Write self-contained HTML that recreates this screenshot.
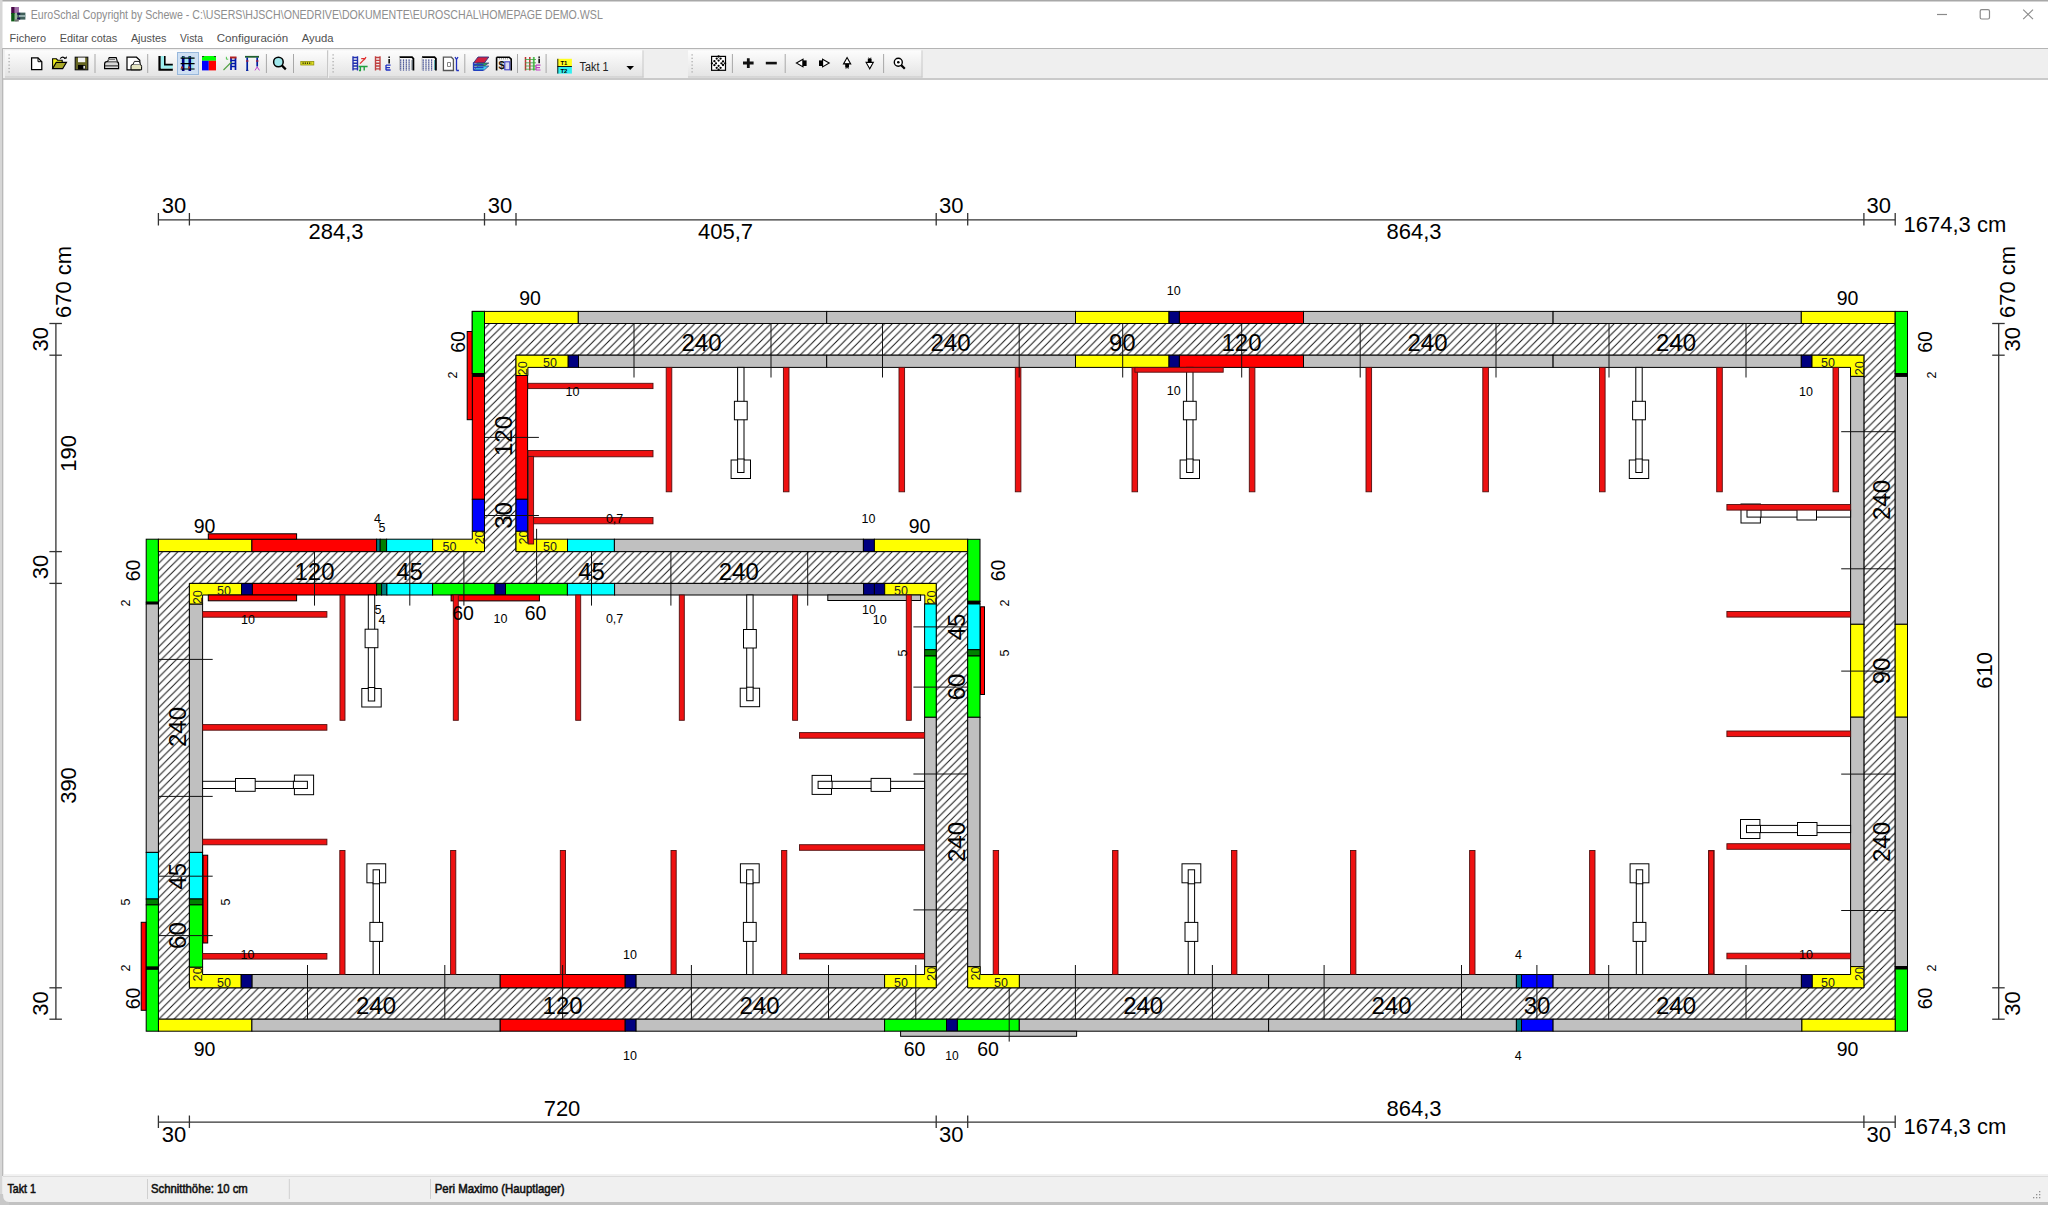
<!DOCTYPE html><html><head><meta charset="utf-8"><style>html,body{margin:0;padding:0;background:#fff;overflow:hidden}svg{display:block;font-family:"Liberation Sans",sans-serif}</style></head><body>
<svg width="2048" height="1205" viewBox="0 0 2048 1205">
<defs><pattern id="h" patternUnits="userSpaceOnUse" width="7.6" height="7.6"><path d="M-1,1 L1,-1 M0,7.6 L7.6,0 M6.6,8.6 L8.6,6.6" stroke="#111" stroke-width="1"/></pattern><linearGradient id="tb" x1="0" y1="0" x2="0" y2="1"><stop offset="0" stop-color="#fdfdfd"/><stop offset="1" stop-color="#e3e3e3"/></linearGradient></defs>
<rect x="0.0" y="0.0" width="2048.0" height="1205.0" fill="#ffffff"/>
<rect x="0.0" y="0.0" width="2048.0" height="1.5" fill="#a8a8a8"/>
<rect x="0.0" y="0.0" width="2.5" height="1205.0" fill="#d6d6d6"/>
<rect x="2.5" y="48.0" width="0.7" height="1128.0" fill="#888"/>
<rect x="11.2" y="7" width="3.6" height="7" fill="#4a0a4a"/><rect x="14.8" y="7" width="4.2" height="6" fill="#a070a8"/><rect x="11.2" y="13" width="3.6" height="8.4" fill="#0a5a14"/><rect x="14.8" y="13" width="2.4" height="8.4" fill="#9ab89a"/><rect x="17.2" y="12.6" width="8.2" height="7" fill="#40605a"/><rect x="17.2" y="12.8" width="3" height="2" fill="#1a1050"/><rect x="17.2" y="17.6" width="3" height="2" fill="#1a1050"/><rect x="19" y="15.2" width="6.4" height="1.6" fill="#a8c0c0"/><rect x="14.8" y="19.5" width="4" height="2" fill="#707070"/>
<text x="30.8" y="19.2" font-size="13.4" text-anchor="start" fill="#8e8e8e" textLength="572" lengthAdjust="spacingAndGlyphs">EuroSchal Copyright by Schewe - C:\USERS\HJSCH\ONEDRIVE\DOKUMENTE\EUROSCHAL\HOMEPAGE DEMO.WSL</text>
<line x1="1937.0" y1="14.5" x2="1947.0" y2="14.5" stroke="#8a8a8a" stroke-width="1.2"/>
<rect x="1980.2" y="9.7" width="9.3" height="9.3" rx="1.5" fill="none" stroke="#8a8a8a" stroke-width="1.2"/>
<line x1="2023.2" y1="9.6" x2="2033.0" y2="19.2" stroke="#8a8a8a" stroke-width="1.1"/>
<line x1="2033.0" y1="9.6" x2="2023.2" y2="19.2" stroke="#8a8a8a" stroke-width="1.1"/>
<text x="9.6" y="42.3" font-size="11.8" text-anchor="start" fill="#505050" textLength="36.5" lengthAdjust="spacingAndGlyphs">Fichero</text>
<text x="59.8" y="42.3" font-size="11.8" text-anchor="start" fill="#505050" textLength="57.4" lengthAdjust="spacingAndGlyphs">Editar cotas</text>
<text x="130.9" y="42.3" font-size="11.8" text-anchor="start" fill="#505050" textLength="35.5" lengthAdjust="spacingAndGlyphs">Ajustes</text>
<text x="180.1" y="42.3" font-size="11.8" text-anchor="start" fill="#505050" textLength="22.9" lengthAdjust="spacingAndGlyphs">Vista</text>
<text x="216.7" y="42.3" font-size="11.8" text-anchor="start" fill="#505050" textLength="71.4" lengthAdjust="spacingAndGlyphs">Configuración</text>
<text x="301.8" y="42.3" font-size="11.8" text-anchor="start" fill="#505050" textLength="31.8" lengthAdjust="spacingAndGlyphs">Ayuda</text>
<rect x="3.0" y="48.0" width="2045.0" height="1.0" fill="#b4b4b4"/>
<rect x="3.0" y="49.0" width="2045.0" height="29.0" fill="#efefef"/>
<rect x="3.0" y="78.2" width="2045.0" height="1.6" fill="#bdbdbd"/>
<rect x="5" y="50.3" width="323" height="27.200000000000003" fill="url(#tb)"/>
<rect x="327.0" y="50.3" width="1.0" height="27.2" fill="#c8c8c8"/>
<rect x="5.0" y="76.5" width="323.0" height="1.0" fill="#c8c8c8"/>
<rect x="8.5" y="54.3" width="1.2" height="1.2" fill="#a0a0a0"/>
<rect x="8.5" y="57.7" width="1.2" height="1.2" fill="#a0a0a0"/>
<rect x="8.5" y="61.1" width="1.2" height="1.2" fill="#a0a0a0"/>
<rect x="8.5" y="64.5" width="1.2" height="1.2" fill="#a0a0a0"/>
<rect x="8.5" y="67.9" width="1.2" height="1.2" fill="#a0a0a0"/>
<rect x="8.5" y="71.3" width="1.2" height="1.2" fill="#a0a0a0"/>
<rect x="329" y="50.3" width="314.5" height="27.200000000000003" fill="url(#tb)"/>
<rect x="642.5" y="50.3" width="1.0" height="27.2" fill="#c8c8c8"/>
<rect x="329.0" y="76.5" width="314.5" height="1.0" fill="#c8c8c8"/>
<rect x="332.5" y="54.3" width="1.2" height="1.2" fill="#a0a0a0"/>
<rect x="332.5" y="57.7" width="1.2" height="1.2" fill="#a0a0a0"/>
<rect x="332.5" y="61.1" width="1.2" height="1.2" fill="#a0a0a0"/>
<rect x="332.5" y="64.5" width="1.2" height="1.2" fill="#a0a0a0"/>
<rect x="332.5" y="67.9" width="1.2" height="1.2" fill="#a0a0a0"/>
<rect x="332.5" y="71.3" width="1.2" height="1.2" fill="#a0a0a0"/>
<rect x="688" y="50.3" width="234.5" height="27.200000000000003" fill="url(#tb)"/>
<rect x="921.5" y="50.3" width="1.0" height="27.2" fill="#c8c8c8"/>
<rect x="688.0" y="76.5" width="234.5" height="1.0" fill="#c8c8c8"/>
<rect x="691.5" y="54.3" width="1.2" height="1.2" fill="#a0a0a0"/>
<rect x="691.5" y="57.7" width="1.2" height="1.2" fill="#a0a0a0"/>
<rect x="691.5" y="61.1" width="1.2" height="1.2" fill="#a0a0a0"/>
<rect x="691.5" y="64.5" width="1.2" height="1.2" fill="#a0a0a0"/>
<rect x="691.5" y="67.9" width="1.2" height="1.2" fill="#a0a0a0"/>
<rect x="691.5" y="71.3" width="1.2" height="1.2" fill="#a0a0a0"/>
<rect x="94.5" y="54.0" width="1.0" height="19.0" fill="#a8a8a8"/>
<rect x="147.2" y="54.0" width="1.0" height="19.0" fill="#a8a8a8"/>
<rect x="265.9" y="54.0" width="1.0" height="19.0" fill="#a8a8a8"/>
<rect x="293.0" y="54.0" width="1.0" height="19.0" fill="#a8a8a8"/>
<rect x="464.3" y="54.0" width="1.0" height="19.0" fill="#a8a8a8"/>
<rect x="517.0" y="54.0" width="1.0" height="19.0" fill="#a8a8a8"/>
<rect x="545.6" y="54.0" width="1.0" height="19.0" fill="#a8a8a8"/>
<rect x="731.9" y="54.0" width="1.0" height="19.0" fill="#a8a8a8"/>
<rect x="784.7" y="54.0" width="1.0" height="19.0" fill="#a8a8a8"/>
<rect x="883.1" y="54.0" width="1.0" height="19.0" fill="#a8a8a8"/>
<path d="M31.6,57.9 h6.4 l3.8,3.8 v8 h-10.2 z" fill="#fff" stroke="#000" stroke-width="1.25"/><path d="M38,57.9 v3.8 h3.8" fill="none" stroke="#000" stroke-width="1"/>
<path d="M52.6,68.6 v-9.8 h3.8 l1.2,1.4 h4.6 v2.2" fill="#f2f21a" stroke="#000" stroke-width="1.1"/><path d="M52.6,68.6 l3.6,-6.2 h10.3 l-3.8,6.2 z" fill="#a9a92a" stroke="#000" stroke-width="1.1"/><path d="M60.2,58.6 q2.6,-3 5.2,0.2" fill="none" stroke="#000" stroke-width="1.1"/><path d="M64,58.6 h2.8 v-2.4 z" fill="#000"/>
<rect x="75.2" y="57.2" width="12.6" height="12.6" fill="#666622" stroke="#111" stroke-width="1.1"/><rect x="78" y="57.6" width="7.2" height="4.6" fill="#f4f4f4"/><rect x="78" y="65" width="7.4" height="4.4" fill="#000"/><rect x="83.4" y="65.8" width="1.5" height="2.8" fill="#fff"/>
<path d="M104.6,68.6 v-4.6 q0,-2.4 2.4,-2.4 h9.4 q2.2,0 2.2,2.4 v4.6 z" fill="#d8d8d8" stroke="#000" stroke-width="1.2"/><path d="M107.6,61.6 l1.6,-4 h7 l1.2,4" fill="#e8e8e8" stroke="#000" stroke-width="1.1"/><rect x="105" y="65.2" width="13.4" height="1.3" fill="#444"/><rect x="108" y="59" width="7" height="1" fill="#777"/>
<path d="M127,57.2 h9.5 l3.3,3 v9.6 h-12.8 z" fill="#fff" stroke="#000" stroke-width="1.2"/><path d="M131,69.8 v-3.6 q0,-1.8 1.8,-1.8 h6.6 q2.2,0 2.2,2 v3.4 z" fill="#e4e4c0" stroke="#000" stroke-width="1"/><path d="M133,64.4 l1.4,-3 h5 l1,3" fill="#fff" stroke="#000" stroke-width="0.9"/>
<path d="M158.4,56 h2.4 v12.4 h12 v2.3 h-14.4 z" fill="#000"/><path d="M160.8,56 h4 v8.6 h8 v3.8 h-12 z" fill="#9ef0f0"/><path d="M164.8,56 v8.6 h8" fill="none" stroke="#000" stroke-width="1.6"/>
<rect x="177.5" y="52.5" width="21" height="22" fill="#cfe0f3" stroke="#98b8dc" stroke-width="1"/>
<rect x="181.5" y="57" width="12" height="13" fill="#9ee8f0"/><path d="M183.2,56 v15 M189.8,56 v15" stroke="#000080" stroke-width="2.6"/><path d="M180.6,58.2 h14 M180.6,63.6 h14 M180.6,69 h14" stroke="#000" stroke-width="1.2"/><path d="M181,67.5 h2 M188,67.5 h2" stroke="#a03020" stroke-width="2"/><path d="M182.5,57 h1.5 M189,57 h1.5" stroke="#208040" stroke-width="1.5"/>
<rect x="202" y="56" width="14" height="4.8" fill="#00ff00"/><rect x="202" y="60.8" width="6.8" height="9.6" fill="#0000ff"/><rect x="208.8" y="60.8" width="7.2" height="9.6" fill="#ff0000"/><path d="M202,56.5 h2 M214,56.5 h2" stroke="#333" stroke-width="1"/>
<path d="M231,57.5 v12.5 M235.5,57.5 v12.5 M231,60.5 h4.5 M231,63.5 h4.5 M231,66.5 h4.5" stroke="#0018a8" stroke-width="1.7" fill="none"/><path d="M230,57.5 h6.5" stroke="#b02020" stroke-width="2"/><path d="M223.5,70 l8,-8" stroke="#50a040" stroke-width="1.1"/><path d="M226.4,56.8 v2.4 h1.8" stroke="#40c040" stroke-width="0.9" fill="none"/>
<path d="M245,56.8 h14" stroke="#206030" stroke-width="1.8"/><path d="M247.2,57.5 v13 M257.2,57.5 v9" stroke="#0020a0" stroke-width="1.7"/><path d="M246,61 h2.4 M256,61 h2.4" stroke="#a02040" stroke-width="1.4"/><path d="M255,70.4 l2.2,-3.5 l2.2,3.5" stroke="#c040d0" stroke-width="1" fill="none"/><path d="M246,70.4 h2.4" stroke="#0020a0" stroke-width="1"/>
<circle cx="278.4" cy="62" r="4.8" fill="#a0e8ec" stroke="#000" stroke-width="1.5"/><path d="M281.8,65.4 l4,4" stroke="#000" stroke-width="2.2"/>
<rect x="300.8" y="61.4" width="13" height="3.6" fill="#e0e020" stroke="#909010" stroke-width="0.8"/><path d="M302.5,63.2 h9" stroke="#000" stroke-width="1.2" stroke-dasharray="1.2,1"/>
<path d="M353,56.3 v14.2 M357.5,56.3 v14.2 M353,57.5 h4.5 M353,60.34 h4.5 M353,63.18 h4.5 M353,66.02 h4.5 M353,68.86 h4.5" stroke="#2030b0" stroke-width="1.4" fill="none"/>
<path d="M358.6,66.5 h9 M360.4,66.5 v4 M364.2,66.5 v4 M359,70.5 h2" stroke="#20a040" stroke-width="1.4" fill="none"/><path d="M360,63.6 l5,-5 M361.2,58.6 h4.6 M366,57 l-2,3" stroke="#e03030" stroke-width="1.3" fill="none"/>
<path d="M375.5,56.3 v14.2 M380.0,56.3 v14.2 M375.5,57.5 h4.5 M375.5,60.34 h4.5 M375.5,63.18 h4.5 M375.5,66.02 h4.5 M375.5,68.86 h4.5" stroke="#c04040" stroke-width="1.4" fill="none"/>
<rect x="388.4" y="56.5" width="1.5" height="1.5" fill="#000"/><rect x="388.4" y="59" width="1.5" height="4.5" fill="#000"/><path d="M386,65 v5.3 M386,65.2 h4.6 M386,67.6 h4 M386,70 h4.6" stroke="#2030c0" stroke-width="1.3" fill="none"/>
<path d="M399.5,57.2 h12.5 l1.4,1.4 v12" fill="none" stroke="#000" stroke-width="1.8"/><path d="M399.5,57.2 v13" stroke="#bbb" stroke-width="0.8"/>
<path d="M400.7,59.5 v11" stroke="#203080" stroke-width="1.2" stroke-dasharray="1.2,0.8"/>
<path d="M403.5,59.5 v11" stroke="#203080" stroke-width="1.2" stroke-dasharray="1.2,0.8"/>
<path d="M406.3,59.5 v11" stroke="#203080" stroke-width="1.2" stroke-dasharray="1.2,0.8"/>
<path d="M409.09999999999997,59.5 v11" stroke="#203080" stroke-width="1.2" stroke-dasharray="1.2,0.8"/>
<path d="M412.1,60 v10" stroke="#405060" stroke-width="0.9"/>
<path d="M422,57.2 h12.5 l1.4,1.4 v12" fill="none" stroke="#000" stroke-width="1.8"/><path d="M422,57.2 v13" stroke="#bbb" stroke-width="0.8"/>
<path d="M423.2,59.5 v11" stroke="#203080" stroke-width="1.2" stroke-dasharray="1.2,0.8"/>
<path d="M426.0,59.5 v11" stroke="#203080" stroke-width="1.2" stroke-dasharray="1.2,0.8"/>
<path d="M428.8,59.5 v11" stroke="#203080" stroke-width="1.2" stroke-dasharray="1.2,0.8"/>
<path d="M431.59999999999997,59.5 v11" stroke="#203080" stroke-width="1.2" stroke-dasharray="1.2,0.8"/>
<path d="M434.6,60 v10" stroke="#40a0a0" stroke-width="0.9"/>
<path d="M443.4,57.2 h8 l2,2 v11.3 h-10 z" fill="#fff" stroke="#555" stroke-width="1.3"/><path d="M447.5,62.5 h3 v4 h-3 z" fill="none" stroke="#777" stroke-width="0.9"/><path d="M455,57 l1.5,2.5 l1.5,-2.5 M456.5,59.5 v11 M456.5,70.5 h2.4" stroke="#2030c0" stroke-width="1.3" fill="none"/>
<path d="M473.5,63 l4.5,-6 h10.8 l-4.5,6 z" fill="#d02040" stroke="#303080" stroke-width="0.9"/><path d="M473.5,66 l4.5,-3 h10.8 l-4.5,3 z" fill="#30b050" stroke="#303080" stroke-width="0.7"/><path d="M473.5,70 l4.5,-4 h10.8 l-4.5,4 z" fill="#40d0f0" stroke="#303080" stroke-width="0.7"/><path d="M473.5,62.5 v7.8 M473.5,64.5 h10 M473.5,67.5 h10 M473.5,70.3 h10" stroke="#2040c0" stroke-width="1.3" fill="none"/>
<path d="M496.6,57.2 h12.6 l2,2 v11.4 M496.6,57.2 v13.4" fill="none" stroke="#000" stroke-width="1.6"/><text x="498.4" y="68.8" font-size="11.5" font-weight="bold" fill="#111">$</text><rect x="504.8" y="61.8" width="5" height="8" fill="#d8d8f0" stroke="#4040c0" stroke-width="1.1"/><path d="M499,58.8 h9" stroke="#666" stroke-width="0.8" stroke-dasharray="1,1"/>
<path d="M525.5,57 v13.5 M529.8,57 v13.5" stroke="#c03030" stroke-width="1.5"/><path d="M533.8,57 v13.5" stroke="#50c050" stroke-width="1.8"/><path d="M525,59.5 h11 M525,62.8 h11 M525,66 h11 M525,69.2 h11" stroke="#40a040" stroke-width="1" opacity="0.8"/><rect x="538.4" y="56.5" width="1.5" height="1.4" fill="#000"/><rect x="538.4" y="58.6" width="1.5" height="4.6" fill="#000"/><path d="M536,65.2 h4.5 M536,67.6 h4 M536,70 h4.5 M536,65 v5.2" stroke="#c040c0" stroke-width="1.2" fill="none"/>
<rect x="557.5" y="58.8" width="14.4" height="7.6" fill="#ffff20"/><rect x="557.5" y="66.6" width="14.4" height="7" fill="#30f0f0"/><path d="M557.8,58.8 v14.8 M557.5,66.5 h14.4" stroke="#000" stroke-width="0.9"/><text x="560.4" y="65.4" font-size="6" font-weight="bold" fill="#000">T1</text><text x="560.4" y="72.8" font-size="6" font-weight="bold" fill="#000">T2</text>
<text x="579.6" y="70.6" font-size="12.5" text-anchor="start" fill="#222" textLength="28.8" lengthAdjust="spacingAndGlyphs">Takt 1</text>
<path d="M626.4,66 h7.6 l-3.8,4 z" fill="#000"/>
<rect x="711.6" y="56.4" width="13.9" height="13.9" fill="#fff" stroke="#000" stroke-width="1.2"/><circle cx="718.6" cy="56.5" r="1.15" fill="#000"/><circle cx="716.7" cy="58.6" r="1.15" fill="#000"/><circle cx="720.6" cy="58.6" r="1.15" fill="#000"/><circle cx="718.6" cy="60.6" r="1.15" fill="#000"/><circle cx="714.4" cy="61.2" r="1.15" fill="#000"/><circle cx="723.0" cy="61.4" r="1.15" fill="#000"/><circle cx="711.9" cy="63.3" r="1.15" fill="#000"/><circle cx="716.0" cy="63.3" r="1.15" fill="#000"/><circle cx="721.4" cy="63.3" r="1.15" fill="#000"/><circle cx="725.1" cy="63.3" r="1.15" fill="#000"/><circle cx="714.4" cy="65.2" r="1.15" fill="#000"/><circle cx="723.0" cy="65.0" r="1.15" fill="#000"/><circle cx="718.6" cy="65.8" r="1.15" fill="#000"/><circle cx="716.7" cy="67.8" r="1.15" fill="#000"/><circle cx="720.6" cy="67.8" r="1.15" fill="#000"/><circle cx="718.6" cy="69.7" r="1.15" fill="#000"/>
<path d="M748.3,58.2 v9.8 M743,63 h10.6" stroke="#111" stroke-width="2.8"/>
<path d="M765.8,63.1 h11" stroke="#111" stroke-width="2.6"/>
<path d="M803,59.3 l-6.6,3.8 l6.6,3.8 z" fill="#fff" stroke="#000" stroke-width="1.1"/><rect x="802.6" y="60.4" width="4" height="5.6" fill="#000"/>
<path d="M822.6,59.3 l6.6,3.8 l-6.6,3.8 z" fill="#fff" stroke="#000" stroke-width="1.1"/><rect x="819" y="60.4" width="4" height="5.6" fill="#000"/>
<path d="M847.1,57.5 l-3.6,6.4 h7.2 z" fill="#fff" stroke="#000" stroke-width="1.1"/><rect x="845.2" y="63.6" width="3.8" height="4" fill="#000"/><path d="M845.6,68.5 l1.5,-1 l1.5,1" stroke="#000" stroke-width="0.8" fill="none"/>
<path d="M869.7,68.8 l-3.6,-6.4 h7.2 z" fill="#fff" stroke="#000" stroke-width="1.1"/><rect x="867.8" y="58.6" width="3.8" height="4" fill="#000"/><path d="M868.2,57.8 l1.5,1 l1.5,-1" stroke="#000" stroke-width="0.8" fill="none"/>
<circle cx="898.3" cy="62.2" r="4" fill="#fff" stroke="#000" stroke-width="1.4"/><circle cx="898.3" cy="62.2" r="1.3" fill="#000"/><path d="M901.2,65.1 l3.6,3.6" stroke="#000" stroke-width="2.2"/>
<rect x="3.0" y="1174.5" width="2045.0" height="1.0" fill="#e6e6e6"/>
<rect x="3.0" y="1175.5" width="2045.0" height="26.5" fill="#f0f0f0"/>
<rect x="3.0" y="1176.0" width="2045.0" height="1.0" fill="#dcdcdc"/>
<rect x="0.0" y="1202.0" width="2048.0" height="3.0" fill="#c2c2c2"/>
<path d="M0,1194 L3,1194 Q3,1202 9,1202 L9,1205 L0,1205 Z" fill="#c8c8c8"/>
<rect x="147.0" y="1179.0" width="1.0" height="20.0" fill="#d0d0d0"/>
<rect x="288.8" y="1179.0" width="1.0" height="20.0" fill="#d0d0d0"/>
<rect x="430.0" y="1179.0" width="1.0" height="20.0" fill="#d0d0d0"/>
<text x="7.5" y="1193.0" font-size="12.2" text-anchor="start" fill="#111" textLength="28.4" lengthAdjust="spacingAndGlyphs" stroke="#111" stroke-width="0.55">Takt 1</text>
<text x="151.0" y="1193.0" font-size="12.2" text-anchor="start" fill="#111" textLength="96.8" lengthAdjust="spacingAndGlyphs" stroke="#111" stroke-width="0.55">Schnitthöhe: 10 cm</text>
<text x="434.7" y="1193.0" font-size="12.2" text-anchor="start" fill="#111" textLength="129.9" lengthAdjust="spacingAndGlyphs" stroke="#111" stroke-width="0.55">Peri Maximo (Hauptlager)</text>
<rect x="2039.0" y="1197.0" width="1.3" height="1.3" fill="#909090"/>
<rect x="2036.0" y="1197.0" width="1.3" height="1.3" fill="#909090"/>
<rect x="2039.0" y="1194.0" width="1.3" height="1.3" fill="#909090"/>
<rect x="2033.0" y="1197.0" width="1.3" height="1.3" fill="#909090"/>
<rect x="2036.0" y="1194.0" width="1.3" height="1.3" fill="#909090"/>
<rect x="2039.0" y="1191.0" width="1.3" height="1.3" fill="#909090"/>
<g>
<path d="M484.5,323.5 H1895.2 V1019.2 H158.4 V551.6 H484.5 Z M189.4,583.4 H936.2 V987.8 H189.4 Z M516.0,355.2 H1863.9 V987.8 H967.7 V551.6 H516.0 Z" fill="#fff" fill-rule="evenodd"/>
<path d="M484.5,323.5 H1895.2 V1019.2 H158.4 V551.6 H484.5 Z M189.4,583.4 H936.2 V987.8 H189.4 Z M516.0,355.2 H1863.9 V987.8 H967.7 V551.6 H516.0 Z" fill="url(#h)" fill-rule="evenodd" stroke="#000" stroke-width="1"/>
<rect x="484.5" y="311.4" width="93.8" height="12.1" fill="#ffff00" stroke="#000" stroke-width="1"/>
<rect x="578.3" y="311.4" width="248.4" height="12.1" fill="#c0c0c0" stroke="#000" stroke-width="1"/>
<rect x="826.7" y="311.4" width="248.8" height="12.1" fill="#c0c0c0" stroke="#000" stroke-width="1"/>
<rect x="1075.5" y="311.4" width="93.5" height="12.1" fill="#ffff00" stroke="#000" stroke-width="1"/>
<rect x="1169.0" y="311.4" width="10.4" height="12.1" fill="#000080" stroke="#000" stroke-width="1"/>
<rect x="1179.4" y="311.4" width="124.1" height="12.1" fill="#ff0000" stroke="#000" stroke-width="1"/>
<rect x="1303.5" y="311.4" width="249.6" height="12.1" fill="#c0c0c0" stroke="#000" stroke-width="1"/>
<rect x="1553.1" y="311.4" width="248.2" height="12.1" fill="#c0c0c0" stroke="#000" stroke-width="1"/>
<rect x="1801.3" y="311.4" width="93.9" height="12.1" fill="#ffff00" stroke="#000" stroke-width="1"/>
<rect x="578.5" y="355.2" width="248.2" height="12.2" fill="#c0c0c0" stroke="#000" stroke-width="1"/>
<rect x="826.7" y="355.2" width="248.8" height="12.2" fill="#c0c0c0" stroke="#000" stroke-width="1"/>
<rect x="1075.5" y="355.2" width="93.5" height="12.2" fill="#ffff00" stroke="#000" stroke-width="1"/>
<rect x="1169.0" y="355.2" width="10.4" height="12.2" fill="#000080" stroke="#000" stroke-width="1"/>
<rect x="1179.4" y="355.2" width="124.1" height="12.2" fill="#ff0000" stroke="#000" stroke-width="1"/>
<rect x="1303.5" y="355.2" width="249.6" height="12.2" fill="#c0c0c0" stroke="#000" stroke-width="1"/>
<rect x="1553.1" y="355.2" width="248.2" height="12.2" fill="#c0c0c0" stroke="#000" stroke-width="1"/>
<rect x="1801.3" y="355.2" width="10.7" height="12.2" fill="#000080" stroke="#000" stroke-width="1"/>
<rect x="568.0" y="355.2" width="10.5" height="12.2" fill="#000080" stroke="#000" stroke-width="1"/>
<path d="M516.0,355.2 L568.0,355.2 L568.0,367.4 L527.9,367.4 L527.9,375.5 L516.0,375.5 Z" fill="#ffff00" stroke="#000" stroke-width="1"/>
<path d="M1812.0,355.2 L1863.9,355.2 L1863.9,376.4 L1850.5,376.4 L1850.5,367.4 L1812.0,367.4 Z" fill="#ffff00" stroke="#000" stroke-width="1"/>
<rect x="1895.2" y="311.4" width="12.3" height="62.1" fill="#00ff00" stroke="#000" stroke-width="1"/>
<rect x="1895.2" y="373.5" width="12.3" height="2.9" fill="#000000" stroke="#000" stroke-width="1"/>
<rect x="1895.2" y="376.4" width="12.3" height="247.9" fill="#c0c0c0" stroke="#000" stroke-width="1"/>
<rect x="1895.2" y="624.3" width="12.3" height="92.9" fill="#ffff00" stroke="#000" stroke-width="1"/>
<rect x="1895.2" y="717.2" width="12.3" height="249.3" fill="#c0c0c0" stroke="#000" stroke-width="1"/>
<rect x="1895.2" y="966.5" width="12.3" height="2.5" fill="#000000" stroke="#000" stroke-width="1"/>
<rect x="1895.2" y="969.0" width="12.3" height="62.2" fill="#00ff00" stroke="#000" stroke-width="1"/>
<rect x="1850.6" y="376.4" width="13.3" height="247.9" fill="#c0c0c0" stroke="#000" stroke-width="1"/>
<rect x="1850.6" y="624.3" width="13.3" height="92.9" fill="#ffff00" stroke="#000" stroke-width="1"/>
<rect x="1850.6" y="717.2" width="13.3" height="249.4" fill="#c0c0c0" stroke="#000" stroke-width="1"/>
<rect x="158.4" y="1019.2" width="93.5" height="12.0" fill="#ffff00" stroke="#000" stroke-width="1"/>
<rect x="251.9" y="1019.2" width="248.3" height="12.0" fill="#c0c0c0" stroke="#000" stroke-width="1"/>
<rect x="500.2" y="1019.2" width="125.0" height="12.0" fill="#ff0000" stroke="#000" stroke-width="1"/>
<rect x="625.2" y="1019.2" width="10.9" height="12.0" fill="#000080" stroke="#000" stroke-width="1"/>
<rect x="636.1" y="1019.2" width="248.5" height="12.0" fill="#c0c0c0" stroke="#000" stroke-width="1"/>
<rect x="884.6" y="1019.2" width="61.9" height="12.0" fill="#00ff00" stroke="#000" stroke-width="1"/>
<rect x="946.5" y="1019.2" width="10.9" height="12.0" fill="#000080" stroke="#000" stroke-width="1"/>
<rect x="957.4" y="1019.2" width="61.9" height="12.0" fill="#00ff00" stroke="#000" stroke-width="1"/>
<rect x="1019.3" y="1019.2" width="249.3" height="12.0" fill="#c0c0c0" stroke="#000" stroke-width="1"/>
<rect x="1268.6" y="1019.2" width="247.8" height="12.0" fill="#c0c0c0" stroke="#000" stroke-width="1"/>
<rect x="1516.4" y="1019.2" width="5.1" height="12.0" fill="#008080" stroke="#000" stroke-width="1"/>
<rect x="1521.5" y="1019.2" width="31.6" height="12.0" fill="#0000ff" stroke="#000" stroke-width="1"/>
<rect x="1553.1" y="1019.2" width="248.8" height="12.0" fill="#c0c0c0" stroke="#000" stroke-width="1"/>
<rect x="1801.9" y="1019.2" width="93.3" height="12.0" fill="#ffff00" stroke="#000" stroke-width="1"/>
<rect x="900.6" y="1031.2" width="176.0" height="5.1" fill="#c0c0c0" stroke="#000" stroke-width="1"/>
<rect x="251.9" y="974.5" width="248.3" height="13.3" fill="#c0c0c0" stroke="#000" stroke-width="1"/>
<rect x="500.2" y="974.5" width="125.0" height="13.3" fill="#ff0000" stroke="#000" stroke-width="1"/>
<rect x="625.2" y="974.5" width="10.9" height="13.3" fill="#000080" stroke="#000" stroke-width="1"/>
<rect x="636.1" y="974.5" width="248.5" height="13.3" fill="#c0c0c0" stroke="#000" stroke-width="1"/>
<rect x="241.0" y="974.5" width="10.9" height="13.3" fill="#000080" stroke="#000" stroke-width="1"/>
<path d="M189.4,967.1 L202.6,967.1 L202.6,974.5 L241.0,974.5 L241.0,987.8 L189.4,987.8 Z" fill="#ffff00" stroke="#000" stroke-width="1"/>
<path d="M884.6,974.5 L924.6,974.5 L924.6,966.6 L936.2,966.6 L936.2,987.8 L884.6,987.8 Z" fill="#ffff00" stroke="#000" stroke-width="1"/>
<rect x="1019.3" y="974.5" width="249.3" height="13.3" fill="#c0c0c0" stroke="#000" stroke-width="1"/>
<rect x="1268.6" y="974.5" width="247.8" height="13.3" fill="#c0c0c0" stroke="#000" stroke-width="1"/>
<rect x="1516.4" y="974.5" width="5.1" height="13.3" fill="#008080" stroke="#000" stroke-width="1"/>
<rect x="1521.5" y="974.5" width="31.6" height="13.3" fill="#0000ff" stroke="#000" stroke-width="1"/>
<rect x="1553.1" y="974.5" width="248.3" height="13.3" fill="#c0c0c0" stroke="#000" stroke-width="1"/>
<rect x="1801.4" y="974.5" width="10.9" height="13.3" fill="#000080" stroke="#000" stroke-width="1"/>
<path d="M967.7,966.6 L980.3,966.6 L980.3,974.5 L1019.3,974.5 L1019.3,987.8 L967.7,987.8 Z" fill="#ffff00" stroke="#000" stroke-width="1"/>
<path d="M1812.3,974.5 L1850.6,974.5 L1850.6,966.6 L1863.9,966.6 L1863.9,987.8 L1812.3,987.8 Z" fill="#ffff00" stroke="#000" stroke-width="1"/>
<rect x="146.2" y="539.2" width="12.2" height="63.0" fill="#00ff00" stroke="#000" stroke-width="1"/>
<rect x="146.2" y="602.2" width="12.2" height="1.8" fill="#000000" stroke="#000" stroke-width="1"/>
<rect x="146.2" y="604.0" width="12.2" height="248.4" fill="#c0c0c0" stroke="#000" stroke-width="1"/>
<rect x="146.2" y="852.4" width="12.2" height="46.6" fill="#00ffff" stroke="#000" stroke-width="1"/>
<rect x="146.2" y="899.0" width="12.2" height="5.9" fill="#008000" stroke="#000" stroke-width="1"/>
<rect x="146.2" y="904.9" width="12.2" height="62.2" fill="#00ff00" stroke="#000" stroke-width="1"/>
<rect x="146.2" y="967.1" width="12.2" height="2.2" fill="#000000" stroke="#000" stroke-width="1"/>
<rect x="146.2" y="969.3" width="12.2" height="61.9" fill="#00ff00" stroke="#000" stroke-width="1"/>
<rect x="141.2" y="922.3" width="4.8" height="88.0" fill="#ff0000" stroke="#000" stroke-width="1"/>
<rect x="189.4" y="604.0" width="13.2" height="248.4" fill="#c0c0c0" stroke="#000" stroke-width="1"/>
<rect x="189.4" y="852.4" width="13.2" height="46.6" fill="#00ffff" stroke="#000" stroke-width="1"/>
<rect x="189.4" y="899.0" width="13.2" height="5.9" fill="#008000" stroke="#000" stroke-width="1"/>
<rect x="189.4" y="904.9" width="13.2" height="62.2" fill="#00ff00" stroke="#000" stroke-width="1"/>
<rect x="203.1" y="855.2" width="4.6" height="87.8" fill="#ff0000" stroke="#000" stroke-width="1"/>
<rect x="158.4" y="539.2" width="93.5" height="12.4" fill="#ffff00" stroke="#000" stroke-width="1"/>
<rect x="251.9" y="539.2" width="124.7" height="12.4" fill="#ff0000" stroke="#000" stroke-width="1"/>
<rect x="376.6" y="539.2" width="3.6" height="12.4" fill="#008080" stroke="#000" stroke-width="1"/>
<rect x="380.2" y="539.2" width="6.4" height="12.4" fill="#008000" stroke="#000" stroke-width="1"/>
<rect x="386.6" y="539.2" width="46.0" height="12.4" fill="#00ffff" stroke="#000" stroke-width="1"/>
<rect x="208.3" y="533.8" width="88.3" height="5.4" fill="#ff0000" stroke="#000" stroke-width="1"/>
<path d="M432.6,539.2 L472.3,539.2 L472.3,531.2 L484.5,531.2 L484.5,551.6 L432.6,551.6 Z" fill="#ffff00" stroke="#000" stroke-width="1"/>
<path d="M516.0,531.2 L527.6,531.2 L527.6,539.2 L567.5,539.2 L567.5,551.6 L516.0,551.6 Z" fill="#ffff00" stroke="#000" stroke-width="1"/>
<rect x="567.5" y="539.2" width="46.9" height="12.4" fill="#00ffff" stroke="#000" stroke-width="1"/>
<rect x="614.4" y="539.2" width="249.0" height="12.4" fill="#c0c0c0" stroke="#000" stroke-width="1"/>
<rect x="863.4" y="539.2" width="11.0" height="12.4" fill="#000080" stroke="#000" stroke-width="1"/>
<rect x="874.4" y="539.2" width="93.3" height="12.4" fill="#ffff00" stroke="#000" stroke-width="1"/>
<rect x="967.7" y="539.3" width="12.3" height="62.0" fill="#00ff00" stroke="#000" stroke-width="1"/>
<rect x="967.7" y="601.3" width="12.3" height="2.7" fill="#000000" stroke="#000" stroke-width="1"/>
<rect x="967.7" y="604.0" width="12.3" height="45.7" fill="#00ffff" stroke="#000" stroke-width="1"/>
<rect x="967.7" y="649.7" width="12.3" height="6.3" fill="#008000" stroke="#000" stroke-width="1"/>
<rect x="967.7" y="656.0" width="12.3" height="61.3" fill="#00ff00" stroke="#000" stroke-width="1"/>
<rect x="967.7" y="717.3" width="12.3" height="249.3" fill="#c0c0c0" stroke="#000" stroke-width="1"/>
<rect x="980.5" y="606.8" width="4.0" height="87.7" fill="#ff0000" stroke="#000" stroke-width="1"/>
<rect x="241.5" y="583.4" width="10.9" height="11.6" fill="#000080" stroke="#000" stroke-width="1"/>
<rect x="252.4" y="583.4" width="124.2" height="11.6" fill="#ff0000" stroke="#000" stroke-width="1"/>
<rect x="376.6" y="583.4" width="5.0" height="11.6" fill="#008000" stroke="#000" stroke-width="1"/>
<rect x="381.6" y="583.4" width="5.3" height="11.6" fill="#008080" stroke="#000" stroke-width="1"/>
<rect x="386.9" y="583.4" width="45.7" height="11.6" fill="#00ffff" stroke="#000" stroke-width="1"/>
<rect x="432.6" y="583.4" width="62.4" height="11.6" fill="#00ff00" stroke="#000" stroke-width="1"/>
<rect x="495.0" y="583.4" width="10.5" height="11.6" fill="#000080" stroke="#000" stroke-width="1"/>
<rect x="505.5" y="583.4" width="61.9" height="11.6" fill="#00ff00" stroke="#000" stroke-width="1"/>
<rect x="567.4" y="583.4" width="47.2" height="11.6" fill="#00ffff" stroke="#000" stroke-width="1"/>
<rect x="614.6" y="583.4" width="249.0" height="11.6" fill="#c0c0c0" stroke="#000" stroke-width="1"/>
<rect x="863.6" y="583.4" width="10.8" height="11.6" fill="#000080" stroke="#000" stroke-width="1"/>
<rect x="874.4" y="583.4" width="10.3" height="11.6" fill="#000080" stroke="#000" stroke-width="1"/>
<path d="M189.4,583.4 L241.5,583.4 L241.5,595.0 L202.6,595.0 L202.6,604.0 L189.4,604.0 Z" fill="#ffff00" stroke="#000" stroke-width="1"/>
<path d="M884.7,583.4 L936.2,583.4 L936.2,604.0 L924.8,604.0 L924.8,595.0 L884.7,595.0 Z" fill="#ffff00" stroke="#000" stroke-width="1"/>
<rect x="208.3" y="595.0" width="88.3" height="5.8" fill="#ff0000" stroke="#000" stroke-width="1"/>
<rect x="451.1" y="595.0" width="88.3" height="5.9" fill="#ff0000" stroke="#000" stroke-width="1"/>
<rect x="827.8" y="595.0" width="92.8" height="5.5" fill="#c0c0c0" stroke="#000" stroke-width="1"/>
<rect x="472.3" y="311.4" width="12.2" height="62.1" fill="#00ff00" stroke="#000" stroke-width="1"/>
<rect x="472.3" y="373.5" width="12.2" height="2.9" fill="#000000" stroke="#000" stroke-width="1"/>
<rect x="472.3" y="376.4" width="12.2" height="122.9" fill="#ff0000" stroke="#000" stroke-width="1"/>
<rect x="472.3" y="499.3" width="12.2" height="31.9" fill="#0000ff" stroke="#000" stroke-width="1"/>
<rect x="467.2" y="331.5" width="5.1" height="88.2" fill="#ff0000" stroke="#000" stroke-width="1"/>
<rect x="516.0" y="375.5" width="11.6" height="123.8" fill="#ff0000" stroke="#000" stroke-width="1"/>
<rect x="516.0" y="499.3" width="11.6" height="31.9" fill="#0000ff" stroke="#000" stroke-width="1"/>
<rect x="924.6" y="604.0" width="11.6" height="45.7" fill="#00ffff" stroke="#000" stroke-width="1"/>
<rect x="924.6" y="649.7" width="11.6" height="6.3" fill="#008000" stroke="#000" stroke-width="1"/>
<rect x="924.6" y="656.0" width="11.6" height="61.3" fill="#00ff00" stroke="#000" stroke-width="1"/>
<rect x="924.6" y="717.3" width="11.6" height="249.3" fill="#c0c0c0" stroke="#000" stroke-width="1"/>
<rect x="472.2" y="311.4" width="12.3" height="62.1" fill="#00ff00" stroke="#000" stroke-width="1"/>
<rect x="737.6" y="367.4" width="6.4" height="105.1" fill="#fff" stroke="#000" stroke-width="1"/>
<rect x="731.1" y="460.0" width="19.4" height="18.5" fill="#fff" stroke="#000" stroke-width="1"/>
<rect x="737.6" y="459.0" width="6.4" height="13.5" fill="#fff" stroke="#000" stroke-width="1"/>
<rect x="734.4" y="401.3" width="12.8" height="18.5" fill="#fff" stroke="#000" stroke-width="1"/>
<rect x="1186.6" y="367.4" width="6.4" height="105.1" fill="#fff" stroke="#000" stroke-width="1"/>
<rect x="1180.1" y="460.0" width="19.4" height="18.5" fill="#fff" stroke="#000" stroke-width="1"/>
<rect x="1186.6" y="459.0" width="6.4" height="13.5" fill="#fff" stroke="#000" stroke-width="1"/>
<rect x="1183.4" y="401.3" width="12.8" height="18.5" fill="#fff" stroke="#000" stroke-width="1"/>
<rect x="1635.8" y="367.4" width="6.4" height="105.1" fill="#fff" stroke="#000" stroke-width="1"/>
<rect x="1629.3" y="460.0" width="19.4" height="18.5" fill="#fff" stroke="#000" stroke-width="1"/>
<rect x="1635.8" y="459.0" width="6.4" height="13.5" fill="#fff" stroke="#000" stroke-width="1"/>
<rect x="1632.6" y="401.3" width="12.8" height="18.5" fill="#fff" stroke="#000" stroke-width="1"/>
<rect x="368.3" y="595.0" width="6.4" height="106.0" fill="#fff" stroke="#000" stroke-width="1"/>
<rect x="361.8" y="688.5" width="19.4" height="18.5" fill="#fff" stroke="#000" stroke-width="1"/>
<rect x="368.3" y="687.5" width="6.4" height="13.5" fill="#fff" stroke="#000" stroke-width="1"/>
<rect x="365.1" y="629.2" width="12.8" height="18.5" fill="#fff" stroke="#000" stroke-width="1"/>
<rect x="746.7" y="595.0" width="6.4" height="105.7" fill="#fff" stroke="#000" stroke-width="1"/>
<rect x="740.2" y="688.2" width="19.4" height="18.5" fill="#fff" stroke="#000" stroke-width="1"/>
<rect x="746.7" y="687.2" width="6.4" height="13.5" fill="#fff" stroke="#000" stroke-width="1"/>
<rect x="743.5" y="629.5" width="12.8" height="18.5" fill="#fff" stroke="#000" stroke-width="1"/>
<rect x="373.1" y="869.8" width="6.4" height="104.7" fill="#fff" stroke="#000" stroke-width="1"/>
<rect x="366.9" y="863.8" width="18.8" height="19" fill="#fff" stroke="#000" stroke-width="1"/>
<rect x="373.1" y="869.8" width="6.4" height="14" fill="#fff" stroke="#000" stroke-width="1"/>
<rect x="369.9" y="922.4" width="12.8" height="19" fill="#fff" stroke="#000" stroke-width="1"/>
<rect x="746.6" y="869.8" width="6.4" height="104.7" fill="#fff" stroke="#000" stroke-width="1"/>
<rect x="740.4" y="863.8" width="18.8" height="19" fill="#fff" stroke="#000" stroke-width="1"/>
<rect x="746.6" y="869.8" width="6.4" height="14" fill="#fff" stroke="#000" stroke-width="1"/>
<rect x="743.4" y="922.4" width="12.8" height="19" fill="#fff" stroke="#000" stroke-width="1"/>
<rect x="1188.2" y="869.8" width="6.4" height="104.7" fill="#fff" stroke="#000" stroke-width="1"/>
<rect x="1182.0" y="863.8" width="18.8" height="19" fill="#fff" stroke="#000" stroke-width="1"/>
<rect x="1188.2" y="869.8" width="6.4" height="14" fill="#fff" stroke="#000" stroke-width="1"/>
<rect x="1185.0" y="922.4" width="12.8" height="19" fill="#fff" stroke="#000" stroke-width="1"/>
<rect x="1636.3" y="869.8" width="6.4" height="104.7" fill="#fff" stroke="#000" stroke-width="1"/>
<rect x="1630.1" y="863.8" width="18.8" height="19" fill="#fff" stroke="#000" stroke-width="1"/>
<rect x="1636.3" y="869.8" width="6.4" height="14" fill="#fff" stroke="#000" stroke-width="1"/>
<rect x="1633.1" y="922.4" width="12.8" height="19" fill="#fff" stroke="#000" stroke-width="1"/>
<rect x="202.6" y="781.3" width="104.8" height="7.2" fill="#fff" stroke="#000" stroke-width="1"/>
<rect x="294.4" y="775.1" width="19.2" height="19.6" fill="#fff" stroke="#000" stroke-width="1"/>
<rect x="293.4" y="781.3" width="14" height="7.2" fill="#fff" stroke="#000" stroke-width="1"/>
<rect x="235.5" y="778.5" width="19.7" height="12.8" fill="#fff" stroke="#000" stroke-width="1"/>
<rect x="818.1" y="781.3" width="106.5" height="7.2" fill="#fff" stroke="#000" stroke-width="1"/>
<rect x="812.1" y="775.4" width="19.4" height="19" fill="#fff" stroke="#000" stroke-width="1"/>
<rect x="818.1" y="781.3" width="14" height="7.2" fill="#fff" stroke="#000" stroke-width="1"/>
<rect x="871.1" y="778.4" width="19.5" height="13" fill="#fff" stroke="#000" stroke-width="1"/>
<rect x="1747.0" y="509.9" width="103.6" height="7.2" fill="#fff" stroke="#000" stroke-width="1"/>
<rect x="1741.0" y="504.0" width="19.4" height="19" fill="#fff" stroke="#000" stroke-width="1"/>
<rect x="1747.0" y="509.9" width="14" height="7.2" fill="#fff" stroke="#000" stroke-width="1"/>
<rect x="1797.0" y="507.0" width="19.5" height="13" fill="#fff" stroke="#000" stroke-width="1"/>
<rect x="1746.5" y="825.4" width="104.1" height="7.2" fill="#fff" stroke="#000" stroke-width="1"/>
<rect x="1740.5" y="819.5" width="19.4" height="19" fill="#fff" stroke="#000" stroke-width="1"/>
<rect x="1746.5" y="825.4" width="14" height="7.2" fill="#fff" stroke="#000" stroke-width="1"/>
<rect x="1797.5" y="822.5" width="19.5" height="13" fill="#fff" stroke="#000" stroke-width="1"/>
<rect x="666.2" y="367.4" width="5.6" height="124.4" fill="#ee1111" stroke="#501010" stroke-width="0.9"/>
<rect x="783.4" y="367.4" width="5.6" height="124.4" fill="#ee1111" stroke="#501010" stroke-width="0.9"/>
<rect x="899.0" y="367.4" width="5.6" height="124.4" fill="#ee1111" stroke="#501010" stroke-width="0.9"/>
<rect x="1015.3" y="367.4" width="5.6" height="124.4" fill="#ee1111" stroke="#501010" stroke-width="0.9"/>
<rect x="1132.0" y="367.4" width="5.6" height="124.4" fill="#ee1111" stroke="#501010" stroke-width="0.9"/>
<rect x="1249.3" y="367.4" width="5.6" height="124.4" fill="#ee1111" stroke="#501010" stroke-width="0.9"/>
<rect x="1366.0" y="367.4" width="5.6" height="124.4" fill="#ee1111" stroke="#501010" stroke-width="0.9"/>
<rect x="1482.8" y="367.4" width="5.6" height="124.4" fill="#ee1111" stroke="#501010" stroke-width="0.9"/>
<rect x="1599.5" y="367.4" width="5.6" height="124.4" fill="#ee1111" stroke="#501010" stroke-width="0.9"/>
<rect x="1716.7" y="367.4" width="5.6" height="124.4" fill="#ee1111" stroke="#501010" stroke-width="0.9"/>
<rect x="1833.0" y="367.4" width="5.6" height="124.4" fill="#ee1111" stroke="#501010" stroke-width="0.9"/>
<rect x="1134.9" y="367.4" width="88.3" height="4.8" fill="#ee1111" stroke="#501010" stroke-width="0.9"/>
<rect x="993.2" y="850.5" width="5.4" height="124.0" fill="#ee1111" stroke="#501010" stroke-width="0.9"/>
<rect x="1112.6" y="850.5" width="5.4" height="124.0" fill="#ee1111" stroke="#501010" stroke-width="0.9"/>
<rect x="1231.5" y="850.5" width="5.4" height="124.0" fill="#ee1111" stroke="#501010" stroke-width="0.9"/>
<rect x="1350.5" y="850.5" width="5.4" height="124.0" fill="#ee1111" stroke="#501010" stroke-width="0.9"/>
<rect x="1469.6" y="850.5" width="5.4" height="124.0" fill="#ee1111" stroke="#501010" stroke-width="0.9"/>
<rect x="1589.6" y="850.5" width="5.4" height="124.0" fill="#ee1111" stroke="#501010" stroke-width="0.9"/>
<rect x="1708.7" y="850.5" width="5.4" height="124.0" fill="#ee1111" stroke="#501010" stroke-width="0.9"/>
<rect x="340.0" y="595.0" width="5.0" height="125.3" fill="#ee1111" stroke="#501010" stroke-width="0.9"/>
<rect x="453.3" y="595.0" width="5.0" height="125.3" fill="#ee1111" stroke="#501010" stroke-width="0.9"/>
<rect x="575.7" y="595.0" width="5.0" height="125.3" fill="#ee1111" stroke="#501010" stroke-width="0.9"/>
<rect x="679.3" y="595.0" width="5.0" height="125.3" fill="#ee1111" stroke="#501010" stroke-width="0.9"/>
<rect x="792.6" y="595.0" width="5.0" height="125.3" fill="#ee1111" stroke="#501010" stroke-width="0.9"/>
<rect x="906.3" y="595.0" width="5.0" height="125.3" fill="#ee1111" stroke="#501010" stroke-width="0.9"/>
<rect x="339.8" y="850.5" width="5.2" height="124.0" fill="#ee1111" stroke="#501010" stroke-width="0.9"/>
<rect x="450.6" y="850.5" width="5.2" height="124.0" fill="#ee1111" stroke="#501010" stroke-width="0.9"/>
<rect x="560.3" y="850.5" width="5.2" height="124.0" fill="#ee1111" stroke="#501010" stroke-width="0.9"/>
<rect x="671.0" y="850.5" width="5.2" height="124.0" fill="#ee1111" stroke="#501010" stroke-width="0.9"/>
<rect x="781.6" y="850.5" width="5.2" height="124.0" fill="#ee1111" stroke="#501010" stroke-width="0.9"/>
<rect x="202.6" y="611.6" width="124.3" height="5.6" fill="#ee1111" stroke="#501010" stroke-width="0.9"/>
<rect x="202.6" y="724.6" width="124.3" height="5.6" fill="#ee1111" stroke="#501010" stroke-width="0.9"/>
<rect x="202.6" y="839.2" width="124.3" height="5.6" fill="#ee1111" stroke="#501010" stroke-width="0.9"/>
<rect x="202.6" y="953.5" width="124.3" height="5.6" fill="#ee1111" stroke="#501010" stroke-width="0.9"/>
<rect x="799.5" y="732.6" width="125.1" height="5.6" fill="#ee1111" stroke="#501010" stroke-width="0.9"/>
<rect x="799.5" y="844.7" width="125.1" height="5.6" fill="#ee1111" stroke="#501010" stroke-width="0.9"/>
<rect x="799.5" y="953.4" width="125.1" height="5.6" fill="#ee1111" stroke="#501010" stroke-width="0.9"/>
<rect x="528.0" y="450.5" width="125.0" height="6.3" fill="#ee1111" stroke="#501010" stroke-width="0.9"/>
<rect x="533.0" y="517.5" width="120.0" height="6.3" fill="#ee1111" stroke="#501010" stroke-width="0.9"/>
<rect x="528.3" y="456.4" width="5.3" height="87.6" fill="#ee1111" stroke="#501010" stroke-width="0.9"/>
<rect x="528.0" y="383.3" width="125.0" height="5.3" fill="#ee1111" stroke="#501010" stroke-width="0.9"/>
<rect x="1726.9" y="504.5" width="123.7" height="5.6" fill="#ee1111" stroke="#501010" stroke-width="0.9"/>
<rect x="1726.9" y="611.5" width="123.7" height="5.6" fill="#ee1111" stroke="#501010" stroke-width="0.9"/>
<rect x="1726.9" y="731.0" width="123.7" height="5.6" fill="#ee1111" stroke="#501010" stroke-width="0.9"/>
<rect x="1726.9" y="843.7" width="123.7" height="5.6" fill="#ee1111" stroke="#501010" stroke-width="0.9"/>
<rect x="1726.9" y="953.2" width="123.7" height="5.6" fill="#ee1111" stroke="#501010" stroke-width="0.9"/>
<rect x="1708.7" y="850.8" width="5.0" height="123.2" fill="#ee1111" stroke="#501010" stroke-width="0.9"/>
</g>
<line x1="634.0" y1="323.5" x2="634.0" y2="377.5" stroke="#111" stroke-width="1"/>
<line x1="771.0" y1="323.5" x2="771.0" y2="377.5" stroke="#111" stroke-width="1"/>
<line x1="882.5" y1="323.5" x2="882.5" y2="377.5" stroke="#111" stroke-width="1"/>
<line x1="1019.2" y1="323.5" x2="1019.2" y2="377.5" stroke="#111" stroke-width="1"/>
<line x1="1122.7" y1="323.5" x2="1122.7" y2="377.5" stroke="#111" stroke-width="1"/>
<line x1="1241.7" y1="323.5" x2="1241.7" y2="377.5" stroke="#111" stroke-width="1"/>
<line x1="1360.2" y1="323.5" x2="1360.2" y2="377.5" stroke="#111" stroke-width="1"/>
<line x1="1496.0" y1="323.5" x2="1496.0" y2="377.5" stroke="#111" stroke-width="1"/>
<line x1="1609.0" y1="323.5" x2="1609.0" y2="377.5" stroke="#111" stroke-width="1"/>
<line x1="1746.0" y1="323.5" x2="1746.0" y2="377.5" stroke="#111" stroke-width="1"/>
<line x1="314.5" y1="551.6" x2="314.5" y2="605.6" stroke="#111" stroke-width="1"/>
<line x1="409.8" y1="551.6" x2="409.8" y2="605.6" stroke="#111" stroke-width="1"/>
<line x1="463.9" y1="551.6" x2="463.9" y2="605.6" stroke="#111" stroke-width="1"/>
<line x1="591.5" y1="551.6" x2="591.5" y2="605.6" stroke="#111" stroke-width="1"/>
<line x1="670.9" y1="551.6" x2="670.9" y2="605.6" stroke="#111" stroke-width="1"/>
<line x1="807.7" y1="551.6" x2="807.7" y2="605.6" stroke="#111" stroke-width="1"/>
<line x1="536.6" y1="528.8" x2="536.6" y2="583.4" stroke="#111" stroke-width="1"/>
<line x1="307.5" y1="965.0" x2="307.5" y2="1019.2" stroke="#111" stroke-width="1"/>
<line x1="444.8" y1="965.0" x2="444.8" y2="1019.2" stroke="#111" stroke-width="1"/>
<line x1="562.6" y1="965.0" x2="562.6" y2="1019.2" stroke="#111" stroke-width="1"/>
<line x1="691.4" y1="965.0" x2="691.4" y2="1019.2" stroke="#111" stroke-width="1"/>
<line x1="828.5" y1="965.0" x2="828.5" y2="1019.2" stroke="#111" stroke-width="1"/>
<line x1="915.8" y1="965.0" x2="915.8" y2="1019.2" stroke="#111" stroke-width="1"/>
<line x1="1075.4" y1="965.0" x2="1075.4" y2="1019.2" stroke="#111" stroke-width="1"/>
<line x1="1212.4" y1="965.0" x2="1212.4" y2="1019.2" stroke="#111" stroke-width="1"/>
<line x1="1324.1" y1="965.0" x2="1324.1" y2="1019.2" stroke="#111" stroke-width="1"/>
<line x1="1461.5" y1="965.0" x2="1461.5" y2="1019.2" stroke="#111" stroke-width="1"/>
<line x1="1536.9" y1="965.0" x2="1536.9" y2="1019.2" stroke="#111" stroke-width="1"/>
<line x1="1608.7" y1="965.0" x2="1608.7" y2="1019.2" stroke="#111" stroke-width="1"/>
<line x1="1746.0" y1="965.0" x2="1746.0" y2="1019.2" stroke="#111" stroke-width="1"/>
<line x1="1009.2" y1="987.8" x2="1009.2" y2="1041.6" stroke="#111" stroke-width="1"/>
<line x1="158.4" y1="659.4" x2="212.7" y2="659.4" stroke="#111" stroke-width="1"/>
<line x1="158.4" y1="796.4" x2="212.7" y2="796.4" stroke="#111" stroke-width="1"/>
<line x1="158.4" y1="876.2" x2="212.7" y2="876.2" stroke="#111" stroke-width="1"/>
<line x1="158.4" y1="935.6" x2="212.7" y2="935.6" stroke="#111" stroke-width="1"/>
<line x1="913.4" y1="626.9" x2="967.7" y2="626.9" stroke="#111" stroke-width="1"/>
<line x1="913.4" y1="687.1" x2="967.7" y2="687.1" stroke="#111" stroke-width="1"/>
<line x1="913.4" y1="774.0" x2="967.7" y2="774.0" stroke="#111" stroke-width="1"/>
<line x1="913.4" y1="909.9" x2="967.7" y2="909.9" stroke="#111" stroke-width="1"/>
<line x1="484.5" y1="437.4" x2="538.9" y2="437.4" stroke="#111" stroke-width="1"/>
<line x1="484.5" y1="515.5" x2="538.9" y2="515.5" stroke="#111" stroke-width="1"/>
<line x1="1841.2" y1="431.7" x2="1895.2" y2="431.7" stroke="#111" stroke-width="1"/>
<line x1="1841.2" y1="568.8" x2="1895.2" y2="568.8" stroke="#111" stroke-width="1"/>
<line x1="1841.2" y1="671.1" x2="1895.2" y2="671.1" stroke="#111" stroke-width="1"/>
<line x1="1841.2" y1="774.1" x2="1895.2" y2="774.1" stroke="#111" stroke-width="1"/>
<line x1="1841.2" y1="910.5" x2="1895.2" y2="910.5" stroke="#111" stroke-width="1"/>
<line x1="158.4" y1="219.8" x2="1895.2" y2="219.8" stroke="#333" stroke-width="1.3"/>
<line x1="158.4" y1="213.0" x2="158.4" y2="225.5" stroke="#333" stroke-width="1.3"/>
<line x1="189.4" y1="213.0" x2="189.4" y2="225.5" stroke="#333" stroke-width="1.3"/>
<line x1="484.5" y1="213.0" x2="484.5" y2="225.5" stroke="#333" stroke-width="1.3"/>
<line x1="516.0" y1="213.0" x2="516.0" y2="225.5" stroke="#333" stroke-width="1.3"/>
<line x1="936.2" y1="213.0" x2="936.2" y2="225.5" stroke="#333" stroke-width="1.3"/>
<line x1="967.7" y1="213.0" x2="967.7" y2="225.5" stroke="#333" stroke-width="1.3"/>
<line x1="1863.9" y1="213.0" x2="1863.9" y2="225.5" stroke="#333" stroke-width="1.3"/>
<line x1="1895.2" y1="213.0" x2="1895.2" y2="225.5" stroke="#333" stroke-width="1.3"/>
<line x1="158.4" y1="1122.2" x2="1895.2" y2="1122.2" stroke="#333" stroke-width="1.3"/>
<line x1="158.4" y1="1115.5" x2="158.4" y2="1128.0" stroke="#333" stroke-width="1.3"/>
<line x1="189.4" y1="1115.5" x2="189.4" y2="1128.0" stroke="#333" stroke-width="1.3"/>
<line x1="936.2" y1="1115.5" x2="936.2" y2="1128.0" stroke="#333" stroke-width="1.3"/>
<line x1="967.7" y1="1115.5" x2="967.7" y2="1128.0" stroke="#333" stroke-width="1.3"/>
<line x1="1863.9" y1="1115.5" x2="1863.9" y2="1128.0" stroke="#333" stroke-width="1.3"/>
<line x1="1895.2" y1="1115.5" x2="1895.2" y2="1128.0" stroke="#333" stroke-width="1.3"/>
<line x1="55.9" y1="323.5" x2="55.9" y2="1019.2" stroke="#333" stroke-width="1.3"/>
<line x1="49.4" y1="323.5" x2="61.9" y2="323.5" stroke="#333" stroke-width="1.3"/>
<line x1="49.4" y1="355.2" x2="61.9" y2="355.2" stroke="#333" stroke-width="1.3"/>
<line x1="49.4" y1="551.6" x2="61.9" y2="551.6" stroke="#333" stroke-width="1.3"/>
<line x1="49.4" y1="583.4" x2="61.9" y2="583.4" stroke="#333" stroke-width="1.3"/>
<line x1="49.4" y1="987.8" x2="61.9" y2="987.8" stroke="#333" stroke-width="1.3"/>
<line x1="49.4" y1="1019.2" x2="61.9" y2="1019.2" stroke="#333" stroke-width="1.3"/>
<line x1="1998.7" y1="323.5" x2="1998.7" y2="1019.2" stroke="#333" stroke-width="1.3"/>
<line x1="1992.2" y1="323.5" x2="2004.7" y2="323.5" stroke="#333" stroke-width="1.3"/>
<line x1="1992.2" y1="355.2" x2="2004.7" y2="355.2" stroke="#333" stroke-width="1.3"/>
<line x1="1992.2" y1="987.8" x2="2004.7" y2="987.8" stroke="#333" stroke-width="1.3"/>
<line x1="1992.2" y1="1019.2" x2="2004.7" y2="1019.2" stroke="#333" stroke-width="1.3"/>
<g fill="#000">
<text x="174.0" y="213.3" font-size="22" text-anchor="middle" fill="#000">30</text>
<text x="500.0" y="213.3" font-size="22" text-anchor="middle" fill="#000">30</text>
<text x="951.3" y="213.3" font-size="22" text-anchor="middle" fill="#000">30</text>
<text x="1878.8" y="213.3" font-size="22" text-anchor="middle" fill="#000">30</text>
<text x="336.0" y="239.0" font-size="22" text-anchor="middle" fill="#000">284,3</text>
<text x="725.5" y="239.0" font-size="22" text-anchor="middle" fill="#000">405,7</text>
<text x="1414.0" y="239.0" font-size="22" text-anchor="middle" fill="#000">864,3</text>
<text x="1903.5" y="232.1" font-size="22" text-anchor="start" fill="#000">1674,3 cm</text>
<text x="562.0" y="1116.0" font-size="22" text-anchor="middle" fill="#000">720</text>
<text x="1414.0" y="1116.0" font-size="22" text-anchor="middle" fill="#000">864,3</text>
<text x="174.0" y="1142.0" font-size="22" text-anchor="middle" fill="#000">30</text>
<text x="951.3" y="1142.0" font-size="22" text-anchor="middle" fill="#000">30</text>
<text x="1878.8" y="1142.0" font-size="22" text-anchor="middle" fill="#000">30</text>
<text x="1903.5" y="1134.4" font-size="22" text-anchor="start" fill="#000">1674,3 cm</text>
<text x="0" y="0" transform="translate(71.0,282.0) rotate(-90)" font-size="22" text-anchor="middle" fill="#000">670 cm</text>
<text x="0" y="0" transform="translate(48.0,339.3) rotate(-90)" font-size="22" text-anchor="middle" fill="#000">30</text>
<text x="0" y="0" transform="translate(76.0,453.4) rotate(-90)" font-size="22" text-anchor="middle" fill="#000">190</text>
<text x="0" y="0" transform="translate(48.0,567.0) rotate(-90)" font-size="22" text-anchor="middle" fill="#000">30</text>
<text x="0" y="0" transform="translate(76.0,785.5) rotate(-90)" font-size="22" text-anchor="middle" fill="#000">390</text>
<text x="0" y="0" transform="translate(48.0,1003.5) rotate(-90)" font-size="22" text-anchor="middle" fill="#000">30</text>
<text x="0" y="0" transform="translate(2014.5,282.0) rotate(-90)" font-size="22" text-anchor="middle" fill="#000">670 cm</text>
<text x="0" y="0" transform="translate(2019.5,339.3) rotate(-90)" font-size="22" text-anchor="middle" fill="#000">30</text>
<text x="0" y="0" transform="translate(1992.0,670.4) rotate(-90)" font-size="22" text-anchor="middle" fill="#000">610</text>
<text x="0" y="0" transform="translate(2019.5,1003.5) rotate(-90)" font-size="22" text-anchor="middle" fill="#000">30</text>
<text x="530.0" y="304.5" font-size="19.5" text-anchor="middle" fill="#000">90</text>
<text x="1847.5" y="304.5" font-size="19.5" text-anchor="middle" fill="#000">90</text>
<text x="204.5" y="533.0" font-size="19.5" text-anchor="middle" fill="#000">90</text>
<text x="919.5" y="533.0" font-size="19.5" text-anchor="middle" fill="#000">90</text>
<text x="204.5" y="1056.0" font-size="19.5" text-anchor="middle" fill="#000">90</text>
<text x="914.5" y="1056.0" font-size="19.5" text-anchor="middle" fill="#000">60</text>
<text x="988.0" y="1056.0" font-size="19.5" text-anchor="middle" fill="#000">60</text>
<text x="1847.5" y="1056.0" font-size="19.5" text-anchor="middle" fill="#000">90</text>
<text x="0" y="0" transform="translate(465.0,342.0) rotate(-90)" font-size="19.5" text-anchor="middle" fill="#000">60</text>
<text x="0" y="0" transform="translate(1931.5,342.0) rotate(-90)" font-size="19.5" text-anchor="middle" fill="#000">60</text>
<text x="0" y="0" transform="translate(139.5,570.5) rotate(-90)" font-size="19.5" text-anchor="middle" fill="#000">60</text>
<text x="0" y="0" transform="translate(1004.5,570.5) rotate(-90)" font-size="19.5" text-anchor="middle" fill="#000">60</text>
<text x="0" y="0" transform="translate(139.5,998.5) rotate(-90)" font-size="19.5" text-anchor="middle" fill="#000">60</text>
<text x="0" y="0" transform="translate(1931.5,998.5) rotate(-90)" font-size="19.5" text-anchor="middle" fill="#000">60</text>
<text x="463.0" y="619.5" font-size="19.5" text-anchor="middle" fill="#000">60</text>
<text x="535.5" y="619.5" font-size="19.5" text-anchor="middle" fill="#000">60</text>
<text x="1173.8" y="295.3" font-size="12.5" text-anchor="middle" fill="#000">10</text>
<text x="1173.8" y="395.3" font-size="12.5" text-anchor="middle" fill="#000">10</text>
<text x="572.5" y="395.5" font-size="12.5" text-anchor="middle" fill="#000">10</text>
<text x="1806.0" y="395.5" font-size="12.5" text-anchor="middle" fill="#000">10</text>
<text x="630.0" y="958.5" font-size="12.5" text-anchor="middle" fill="#000">10</text>
<text x="630.0" y="1059.5" font-size="12.5" text-anchor="middle" fill="#000">10</text>
<text x="952.0" y="1059.5" font-size="12" text-anchor="middle" fill="#000">10</text>
<text x="248.0" y="623.5" font-size="12.5" text-anchor="middle" fill="#000">10</text>
<text x="247.5" y="958.5" font-size="12.5" text-anchor="middle" fill="#000">10</text>
<text x="1806.0" y="958.5" font-size="12.5" text-anchor="middle" fill="#000">10</text>
<text x="1518.6" y="958.5" font-size="12.5" text-anchor="middle" fill="#000">4</text>
<text x="1518.3" y="1059.5" font-size="12.5" text-anchor="middle" fill="#000">4</text>
<text x="500.5" y="623.0" font-size="12.5" text-anchor="middle" fill="#000">10</text>
<text x="868.9" y="614.3" font-size="12.5" text-anchor="middle" fill="#000">10</text>
<text x="879.7" y="623.5" font-size="12.5" text-anchor="middle" fill="#000">10</text>
<text x="868.5" y="523.0" font-size="12.5" text-anchor="middle" fill="#000">10</text>
<text x="614.6" y="523.0" font-size="12.5" text-anchor="middle" fill="#000">0,7</text>
<text x="614.6" y="623.0" font-size="12.5" text-anchor="middle" fill="#000">0,7</text>
<text x="377.5" y="522.5" font-size="12.5" text-anchor="middle" fill="#000">4</text>
<text x="382.0" y="532.3" font-size="12.5" text-anchor="middle" fill="#000">5</text>
<text x="378.0" y="614.2" font-size="12.5" text-anchor="middle" fill="#000">5</text>
<text x="382.0" y="624.0" font-size="12.5" text-anchor="middle" fill="#000">4</text>
<text x="0" y="0" transform="translate(456.5,375.0) rotate(-90)" font-size="12.5" text-anchor="middle" fill="#000">2</text>
<text x="0" y="0" transform="translate(1935.8,375.0) rotate(-90)" font-size="12.5" text-anchor="middle" fill="#000">2</text>
<text x="0" y="0" transform="translate(129.5,603.0) rotate(-90)" font-size="12.5" text-anchor="middle" fill="#000">2</text>
<text x="0" y="0" transform="translate(1008.5,603.0) rotate(-90)" font-size="12.5" text-anchor="middle" fill="#000">2</text>
<text x="0" y="0" transform="translate(129.5,968.0) rotate(-90)" font-size="12.5" text-anchor="middle" fill="#000">2</text>
<text x="0" y="0" transform="translate(1935.8,968.0) rotate(-90)" font-size="12.5" text-anchor="middle" fill="#000">2</text>
<text x="0" y="0" transform="translate(129.5,902.0) rotate(-90)" font-size="12.5" text-anchor="middle" fill="#000">5</text>
<text x="0" y="0" transform="translate(230.0,902.0) rotate(-90)" font-size="12.5" text-anchor="middle" fill="#000">5</text>
<text x="0" y="0" transform="translate(1008.5,653.0) rotate(-90)" font-size="12.5" text-anchor="middle" fill="#000">5</text>
<text x="0" y="0" transform="translate(906.5,653.0) rotate(-90)" font-size="12.5" text-anchor="middle" fill="#000">5</text>
<text x="701.5" y="350.6" font-size="24" text-anchor="middle" fill="#000">240</text>
<text x="950.5" y="350.6" font-size="24" text-anchor="middle" fill="#000">240</text>
<text x="1122.3" y="350.6" font-size="24" text-anchor="middle" fill="#000">90</text>
<text x="1241.5" y="350.6" font-size="24" text-anchor="middle" fill="#000">120</text>
<text x="1427.5" y="350.6" font-size="24" text-anchor="middle" fill="#000">240</text>
<text x="1676.0" y="350.6" font-size="24" text-anchor="middle" fill="#000">240</text>
<text x="314.5" y="579.5" font-size="24" text-anchor="middle" fill="#000">120</text>
<text x="409.6" y="579.5" font-size="24" text-anchor="middle" fill="#000">45</text>
<text x="591.5" y="579.5" font-size="24" text-anchor="middle" fill="#000">45</text>
<text x="738.8" y="579.5" font-size="24" text-anchor="middle" fill="#000">240</text>
<text x="376.0" y="1014.0" font-size="24" text-anchor="middle" fill="#000">240</text>
<text x="562.6" y="1014.0" font-size="24" text-anchor="middle" fill="#000">120</text>
<text x="759.5" y="1014.0" font-size="24" text-anchor="middle" fill="#000">240</text>
<text x="1143.2" y="1014.0" font-size="24" text-anchor="middle" fill="#000">240</text>
<text x="1391.5" y="1014.0" font-size="24" text-anchor="middle" fill="#000">240</text>
<text x="1537.0" y="1014.0" font-size="24" text-anchor="middle" fill="#000">30</text>
<text x="1676.0" y="1014.0" font-size="24" text-anchor="middle" fill="#000">240</text>
<text x="0" y="0" transform="translate(512.0,436.0) rotate(-90)" font-size="24" text-anchor="middle" fill="#000">120</text>
<text x="0" y="0" transform="translate(512.0,515.5) rotate(-90)" font-size="24" text-anchor="middle" fill="#000">30</text>
<text x="0" y="0" transform="translate(964.5,627.0) rotate(-90)" font-size="24" text-anchor="middle" fill="#000">45</text>
<text x="0" y="0" transform="translate(964.5,687.0) rotate(-90)" font-size="24" text-anchor="middle" fill="#000">60</text>
<text x="0" y="0" transform="translate(964.5,842.0) rotate(-90)" font-size="24" text-anchor="middle" fill="#000">240</text>
<text x="0" y="0" transform="translate(185.5,727.0) rotate(-90)" font-size="24" text-anchor="middle" fill="#000">240</text>
<text x="0" y="0" transform="translate(185.5,876.2) rotate(-90)" font-size="24" text-anchor="middle" fill="#000">45</text>
<text x="0" y="0" transform="translate(185.5,935.6) rotate(-90)" font-size="24" text-anchor="middle" fill="#000">60</text>
<text x="0" y="0" transform="translate(1890.0,500.0) rotate(-90)" font-size="24" text-anchor="middle" fill="#000">240</text>
<text x="0" y="0" transform="translate(1890.0,671.0) rotate(-90)" font-size="24" text-anchor="middle" fill="#000">90</text>
<text x="0" y="0" transform="translate(1890.0,842.0) rotate(-90)" font-size="24" text-anchor="middle" fill="#000">240</text>
<text x="550.0" y="366.5" font-size="12.5" text-anchor="middle" fill="#222">50</text>
<text x="1828.0" y="366.5" font-size="12.5" text-anchor="middle" fill="#222">50</text>
<text x="550.0" y="550.5" font-size="12.5" text-anchor="middle" fill="#222">50</text>
<text x="449.5" y="550.5" font-size="12.5" text-anchor="middle" fill="#222">50</text>
<text x="224.0" y="594.5" font-size="12.5" text-anchor="middle" fill="#222">50</text>
<text x="901.0" y="594.5" font-size="12.5" text-anchor="middle" fill="#222">50</text>
<text x="224.0" y="986.8" font-size="12.5" text-anchor="middle" fill="#222">50</text>
<text x="901.0" y="986.8" font-size="12.5" text-anchor="middle" fill="#222">50</text>
<text x="1001.0" y="986.8" font-size="12.5" text-anchor="middle" fill="#222">50</text>
<text x="1828.0" y="986.8" font-size="12.5" text-anchor="middle" fill="#222">50</text>
<text x="0" y="0" transform="translate(527.4,368.3) rotate(-90)" font-size="12.8" text-anchor="middle" fill="#222">20</text>
<text x="0" y="0" transform="translate(1864.0,368.2) rotate(-90)" font-size="12.8" text-anchor="middle" fill="#222">20</text>
<text x="0" y="0" transform="translate(483.8,537.5) rotate(-90)" font-size="12.8" text-anchor="middle" fill="#222">20</text>
<text x="0" y="0" transform="translate(527.6,537.5) rotate(-90)" font-size="12.8" text-anchor="middle" fill="#222">20</text>
<text x="0" y="0" transform="translate(202.2,597.2) rotate(-90)" font-size="12.8" text-anchor="middle" fill="#222">20</text>
<text x="0" y="0" transform="translate(936.0,597.6) rotate(-90)" font-size="12.8" text-anchor="middle" fill="#222">20</text>
<text x="0" y="0" transform="translate(202.0,974.3) rotate(-90)" font-size="12.8" text-anchor="middle" fill="#222">20</text>
<text x="0" y="0" transform="translate(936.2,973.8) rotate(-90)" font-size="12.8" text-anchor="middle" fill="#222">20</text>
<text x="0" y="0" transform="translate(979.5,973.5) rotate(-90)" font-size="12.8" text-anchor="middle" fill="#222">20</text>
<text x="0" y="0" transform="translate(1864.0,974.0) rotate(-90)" font-size="12.8" text-anchor="middle" fill="#222">20</text>
</g>
</svg></body></html>
